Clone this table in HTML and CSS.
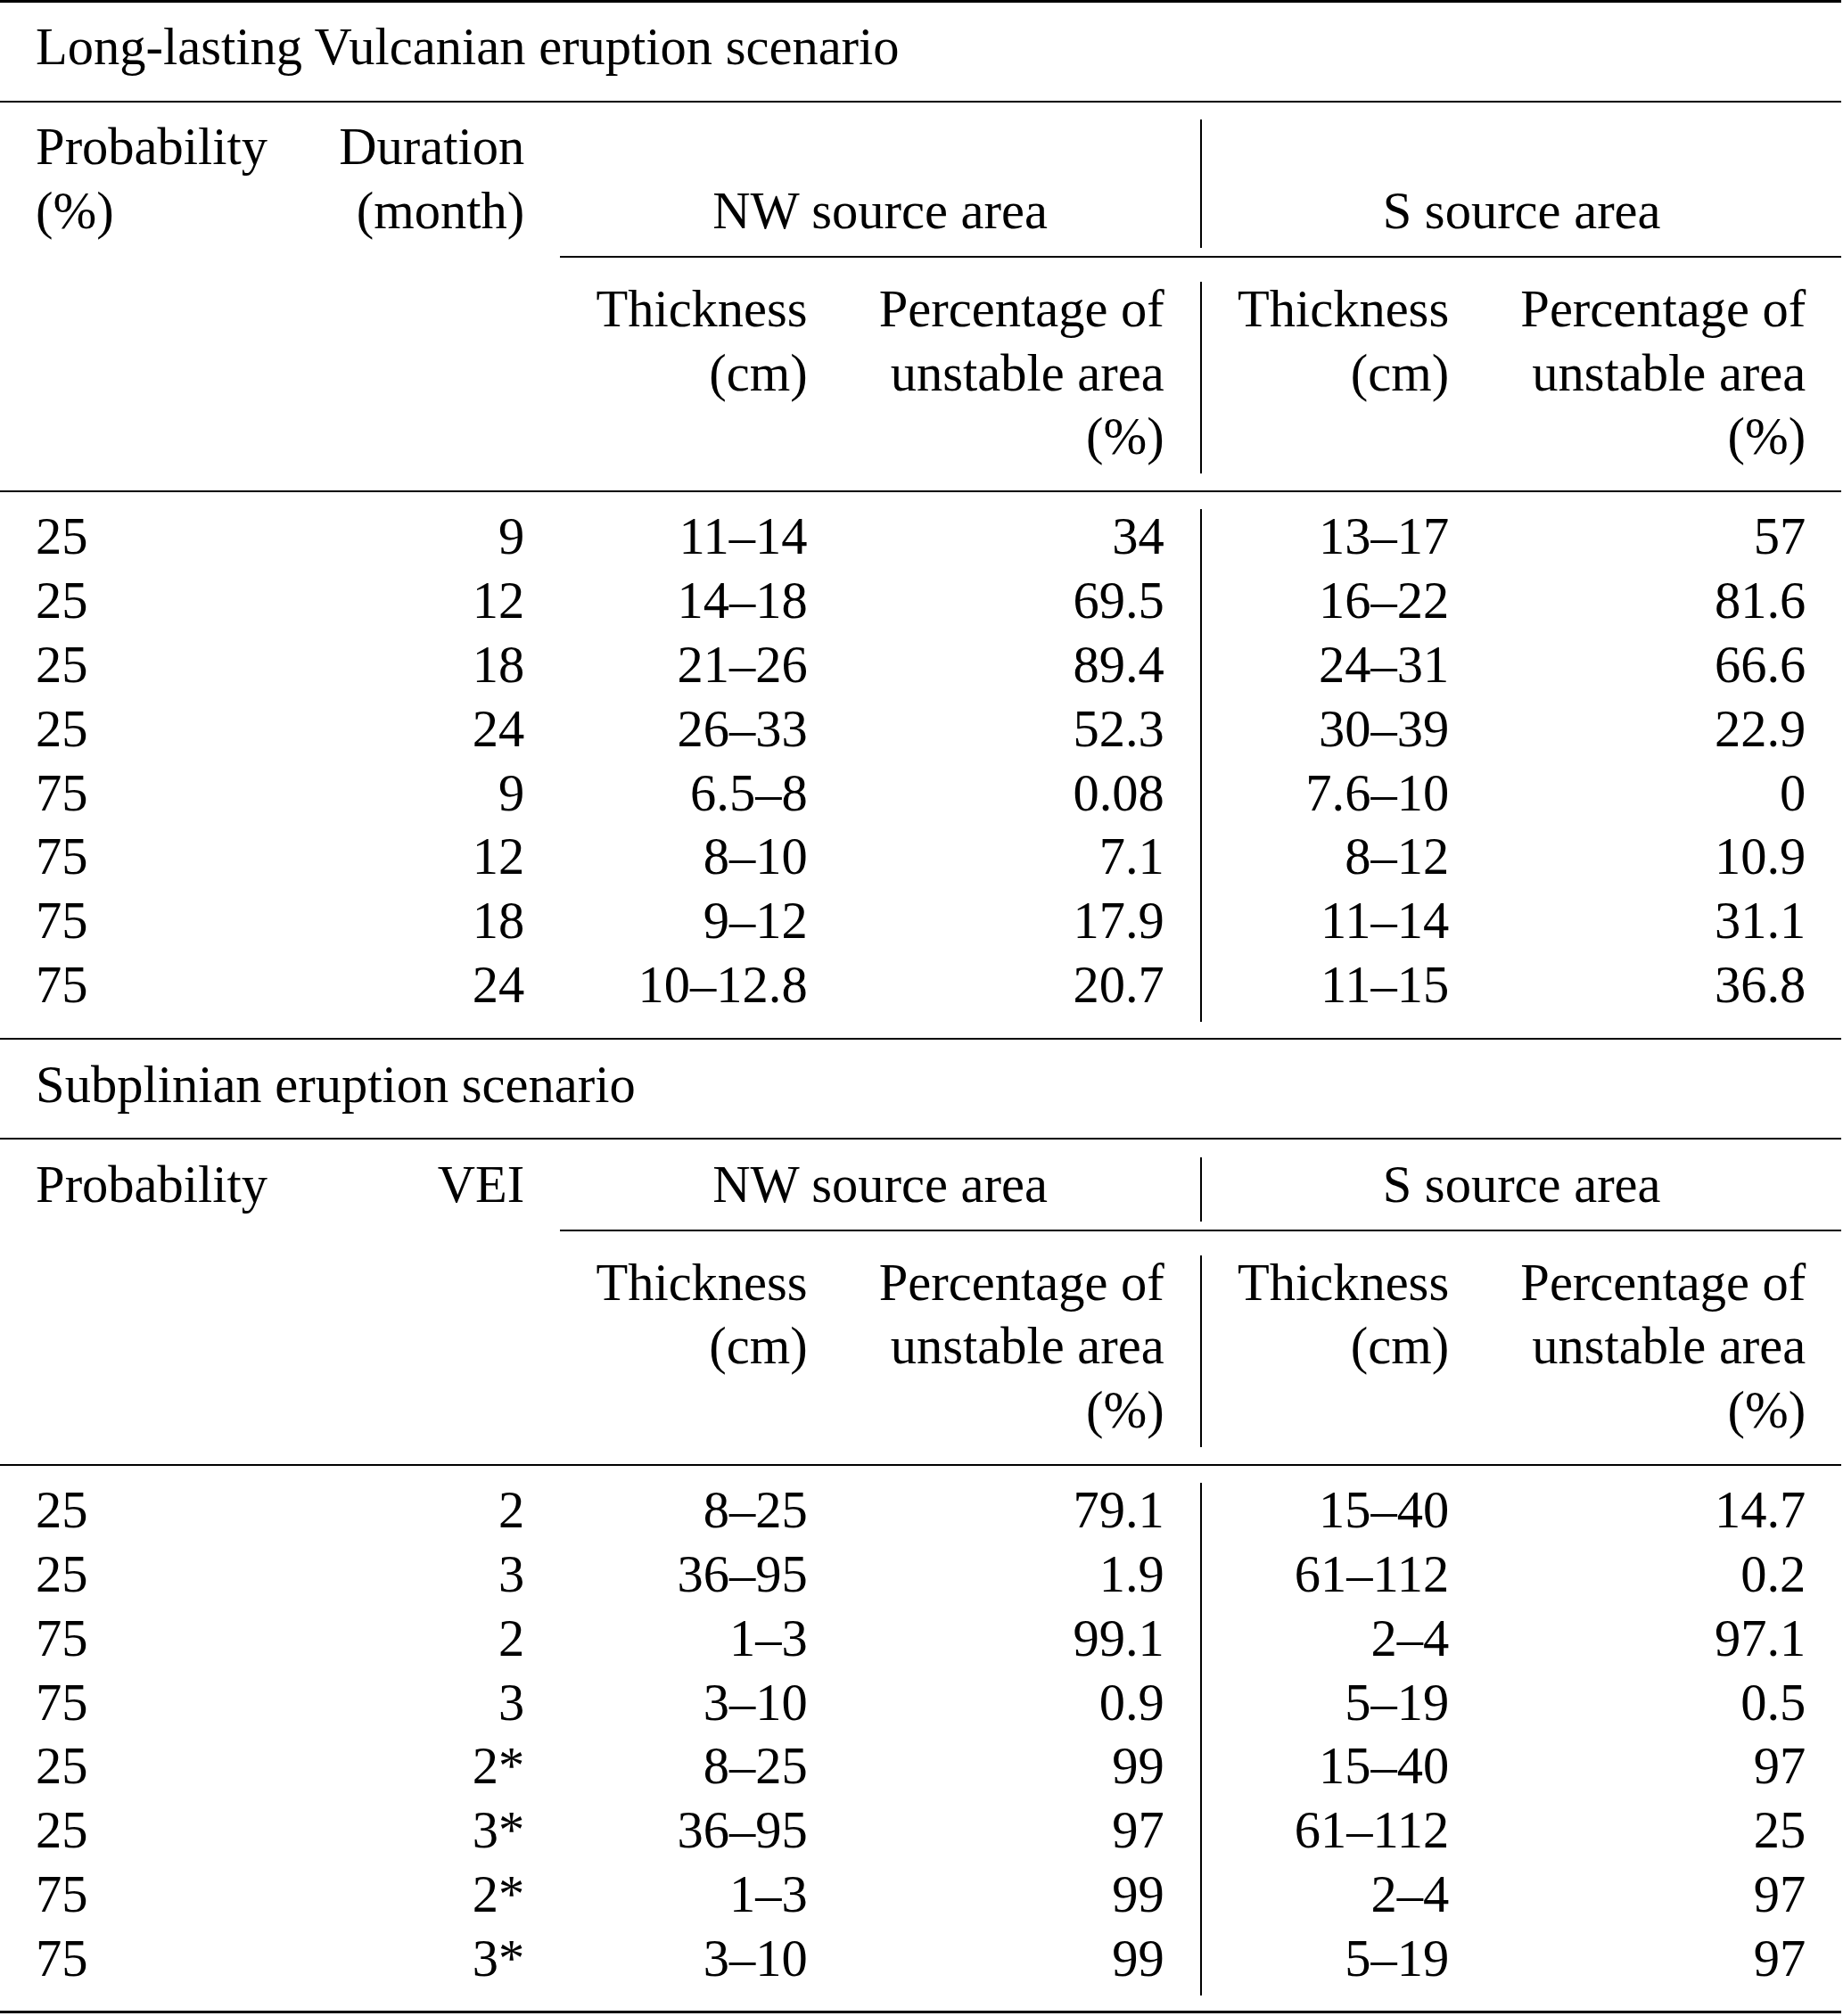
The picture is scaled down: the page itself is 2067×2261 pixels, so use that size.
FILE: index.html
```html
<!DOCTYPE html>
<html lang="en">
<head>
<meta charset="utf-8">
<title>Eruption scenarios</title>
<link rel="stylesheet" href="styles.css">
</head>
<body>
<table class="tbl">
<tbody>
<tr class="rule rule-top"><td colspan="6"><div class="line thick"></div></td></tr>
<tr class="title"><td colspan="6">Long-lasting Vulcanian eruption scenario</td></tr>
<tr class="rule"><td colspan="6"><div class="line"></div></td></tr>
<tr class="head">
  <td class="l"><div class="ln">Probability</div><div class="ln">(%)</div></td>
  <td class="r"><div class="ln">Duration</div><div class="ln">(month)</div></td>
  <td class="ctr" colspan="2">NW source area</td>
  <td class="ctr vl" colspan="2">S source area</td>
</tr>
<tr class="rule cmid"><td colspan="2"></td><td colspan="4"><div class="line"></div></td></tr>
<tr class="head">
  <td></td>
  <td></td>
  <td class="r"><div class="ln">Thickness</div><div class="ln">(cm)</div></td>
  <td class="r"><div class="ln">Percentage of</div><div class="ln">unstable area</div><div class="ln">(%)</div></td>
  <td class="r vl"><div class="ln">Thickness</div><div class="ln">(cm)</div></td>
  <td class="r"><div class="ln">Percentage of</div><div class="ln">unstable area</div><div class="ln">(%)</div></td>
</tr>
<tr class="rule"><td colspan="6"><div class="line"></div></td></tr>
<tr><td class="l">25</td><td class="r">9</td><td class="r">11–14</td><td class="r">34</td><td class="r vl">13–17</td><td class="r">57</td></tr>
<tr><td class="l">25</td><td class="r">12</td><td class="r">14–18</td><td class="r">69.5</td><td class="r vl">16–22</td><td class="r">81.6</td></tr>
<tr><td class="l">25</td><td class="r">18</td><td class="r">21–26</td><td class="r">89.4</td><td class="r vl">24–31</td><td class="r">66.6</td></tr>
<tr><td class="l">25</td><td class="r">24</td><td class="r">26–33</td><td class="r">52.3</td><td class="r vl">30–39</td><td class="r">22.9</td></tr>
<tr><td class="l">75</td><td class="r">9</td><td class="r">6.5–8</td><td class="r">0.08</td><td class="r vl">7.6–10</td><td class="r">0</td></tr>
<tr><td class="l">75</td><td class="r">12</td><td class="r">8–10</td><td class="r">7.1</td><td class="r vl">8–12</td><td class="r">10.9</td></tr>
<tr><td class="l">75</td><td class="r">18</td><td class="r">9–12</td><td class="r">17.9</td><td class="r vl">11–14</td><td class="r">31.1</td></tr>
<tr><td class="l">75</td><td class="r">24</td><td class="r">10–12.8</td><td class="r">20.7</td><td class="r vl">11–15</td><td class="r">36.8</td></tr>
<tr class="rule"><td colspan="6"><div class="line"></div></td></tr>
<tr class="title"><td colspan="6">Subplinian eruption scenario</td></tr>
<tr class="rule"><td colspan="6"><div class="line"></div></td></tr>
<tr class="head">
  <td class="l">Probability</td>
  <td class="r">VEI</td>
  <td class="ctr" colspan="2">NW source area</td>
  <td class="ctr vl" colspan="2">S source area</td>
</tr>
<tr class="rule cmid"><td colspan="2"></td><td colspan="4"><div class="line"></div></td></tr>
<tr class="head">
  <td></td>
  <td></td>
  <td class="r"><div class="ln">Thickness</div><div class="ln">(cm)</div></td>
  <td class="r"><div class="ln">Percentage of</div><div class="ln">unstable area</div><div class="ln">(%)</div></td>
  <td class="r vl"><div class="ln">Thickness</div><div class="ln">(cm)</div></td>
  <td class="r"><div class="ln">Percentage of</div><div class="ln">unstable area</div><div class="ln">(%)</div></td>
</tr>
<tr class="rule"><td colspan="6"><div class="line"></div></td></tr>
<tr><td class="l">25</td><td class="r">2</td><td class="r">8–25</td><td class="r">79.1</td><td class="r vl">15–40</td><td class="r">14.7</td></tr>
<tr><td class="l">25</td><td class="r">3</td><td class="r">36–95</td><td class="r">1.9</td><td class="r vl">61–112</td><td class="r">0.2</td></tr>
<tr><td class="l">75</td><td class="r">2</td><td class="r">1–3</td><td class="r">99.1</td><td class="r vl">2–4</td><td class="r">97.1</td></tr>
<tr><td class="l">75</td><td class="r">3</td><td class="r">3–10</td><td class="r">0.9</td><td class="r vl">5–19</td><td class="r">0.5</td></tr>
<tr><td class="l">25</td><td class="r">2*</td><td class="r">8–25</td><td class="r">99</td><td class="r vl">15–40</td><td class="r">97</td></tr>
<tr><td class="l">25</td><td class="r">3*</td><td class="r">36–95</td><td class="r">97</td><td class="r vl">61–112</td><td class="r">25</td></tr>
<tr><td class="l">75</td><td class="r">2*</td><td class="r">1–3</td><td class="r">99</td><td class="r vl">2–4</td><td class="r">97</td></tr>
<tr><td class="l">75</td><td class="r">3*</td><td class="r">3–10</td><td class="r">99</td><td class="r vl">5–19</td><td class="r">97</td></tr>
<tr class="rule rule-bottom"><td colspan="6"><div class="line thick"></div></td></tr>
</tbody>
</table>
</body>
</html>
```

FILE: styles.css
```css
html, body {
  margin: 0;
  padding: 0;
  background: #fff;
}

body {
  font-family: "Liberation Serif", "Times New Roman", Times, serif;
  font-size: 58.5px;
  color: #000;
}

.tbl {
  border-collapse: separate;
  border-spacing: 0;
}

.tbl td {
  padding: 0 40.1px 10.8px;
  line-height: 61px;
  white-space: nowrap;
  vertical-align: top;
  text-align: left;
}

.tbl .l { text-align: left; }
.tbl .r { text-align: right; }

.tbl .ctr {
  text-align: center;
  vertical-align: bottom;
}

.tbl .vl {
  border-left: 2px solid #000;
}

.ln + .ln {
  margin-top: 10.8px;
}

.tbl .rule td {
  padding: 18.5px 0 19.7px;
  line-height: 0;
}

.tbl .rule-top td {
  padding: 0 0 19.4px;
}

.tbl .rule-bottom td {
  padding: 17.5px 0 0;
}

.tbl .cmid td {
  padding: 9.5px 0 26.4px;
}

.line {
  height: 2px;
  background: #000;
}

.line.thick {
  height: 3px;
}
```
